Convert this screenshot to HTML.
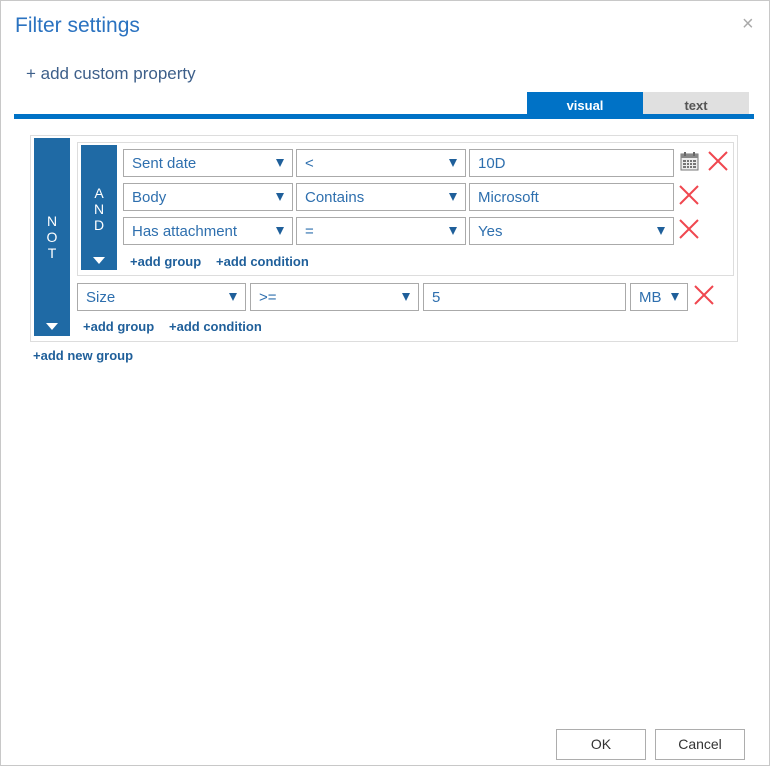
<!DOCTYPE html>
<html><head><meta charset="utf-8"><style>
*{box-sizing:border-box;margin:0;padding:0}
body{width:770px;height:766px;background:#fff;font-family:"Liberation Sans",sans-serif;position:relative;overflow:hidden}
.a{position:absolute}
.win{left:0;top:0;width:770px;height:766px;border:1px solid #c8c8c8}
.f{position:absolute;height:28px;border:1px solid #aaa;background:#fff;color:#2e6fae;font-size:15px;line-height:27px;padding-left:8px}
.f.s:after{content:"";position:absolute;right:8px;top:9px;border-left:4.5px solid transparent;border-right:4.5px solid transparent;border-top:8px solid #1f5f9a}
.lnk{position:absolute;font-size:13px;font-weight:bold;color:#1f5f9a}
.bar{position:absolute;background:#1f6aa5;color:#fff;font-size:14px;text-align:center;line-height:16px}
.tri{position:absolute;left:50%;margin-left:-6px;border-left:6px solid transparent;border-right:6px solid transparent;border-top:7px solid #fff}
.x{position:absolute;width:22px;height:22px}
.btn{position:absolute;top:729px;height:31px;border:1px solid #adadad;background:#fff;font-size:14px;color:#333;text-align:center;line-height:29px}
</style></head><body>
<div class="a win"></div>
<div class="a" style="left:15px;top:14px;font-size:21px;color:#2a72c0">Filter settings</div>
<div class="a" style="left:742px;top:13px;font-size:20px;color:#aaa">×</div>
<div class="a" style="left:26px;top:64px;font-size:17px;color:#3d5f8a">+ add custom property</div>
<div class="a" style="left:527px;top:92px;width:116px;height:24px;background:#0072c6;color:#fff;font-size:13px;font-weight:bold;text-align:center;line-height:27px">visual</div>
<div class="a" style="left:643px;top:92px;width:106px;height:22px;background:#e0e0e0;color:#555;font-size:13px;font-weight:bold;text-align:center;line-height:28px">text</div>
<div class="a" style="left:14px;top:114px;width:740px;height:5px;background:#0072c6"></div>

<div class="a" style="left:30px;top:135px;width:708px;height:207px;border:1px solid #ddd"></div>
<div class="bar" style="left:34px;top:138px;width:36px;height:198px"><div style="position:absolute;top:75px;width:100%">N<br>O<br>T</div><div class="tri" style="top:185px"></div></div>
<div class="a" style="left:77px;top:142px;width:657px;height:134px;border:1px solid #ddd"></div>
<div class="bar" style="left:81px;top:145px;width:36px;height:125px"><div style="position:absolute;top:40px;width:100%">A<br>N<br>D</div><div class="tri" style="top:112px"></div></div>

<div class="f s" style="left:123px;top:149px;width:170px">Sent date</div>
<div class="f s" style="left:296px;top:149px;width:170px">&lt;</div>
<div class="f" style="left:469px;top:149px;width:205px">10D</div>
<svg class="a" style="left:680px;top:151px" width="19" height="20" viewBox="0 0 19 20"><rect x="1" y="3" width="17" height="16" fill="#eee" stroke="#777"/><rect x="1" y="3" width="17" height="4" fill="#888"/><rect x="4" y="1" width="2" height="4" fill="#666"/><rect x="13" y="1" width="2" height="4" fill="#666"/><g fill="#777"><rect x="3" y="9" width="13" height="8"/></g><g stroke="#eee" stroke-width="1"><line x1="6.5" y1="9" x2="6.5" y2="17"/><line x1="9.5" y1="9" x2="9.5" y2="17"/><line x1="12.5" y1="9" x2="12.5" y2="17"/><line x1="3" y1="11.5" x2="16" y2="11.5"/><line x1="3" y1="14.5" x2="16" y2="14.5"/></g></svg>
<svg class="x" style="left:707px;top:150px" viewBox="0 0 22 22"><path d="M2 2L20 20M20 2L2 20" stroke="#f0474f" stroke-width="2"/></svg>

<div class="f s" style="left:123px;top:183px;width:170px">Body</div>
<div class="f s" style="left:296px;top:183px;width:170px">Contains</div>
<div class="f" style="left:469px;top:183px;width:205px">Microsoft</div>
<svg class="x" style="left:678px;top:184px" viewBox="0 0 22 22"><path d="M2 2L20 20M20 2L2 20" stroke="#f0474f" stroke-width="2"/></svg>

<div class="f s" style="left:123px;top:217px;width:170px">Has attachment</div>
<div class="f s" style="left:296px;top:217px;width:170px">=</div>
<div class="f s" style="left:469px;top:217px;width:205px">Yes</div>
<svg class="x" style="left:678px;top:218px" viewBox="0 0 22 22"><path d="M2 2L20 20M20 2L2 20" stroke="#f0474f" stroke-width="2"/></svg>

<div class="lnk" style="left:130px;top:254px">+add group</div>
<div class="lnk" style="left:216px;top:254px">+add condition</div>

<div class="f s" style="left:77px;top:283px;width:169px">Size</div>
<div class="f s" style="left:250px;top:283px;width:169px">&gt;=</div>
<div class="f" style="left:423px;top:283px;width:203px">5</div>
<div class="f s" style="left:630px;top:283px;width:58px">MB</div>
<svg class="x" style="left:693px;top:284px" viewBox="0 0 22 22"><path d="M2 2L20 20M20 2L2 20" stroke="#f0474f" stroke-width="2"/></svg>

<div class="lnk" style="left:83px;top:319px">+add group</div>
<div class="lnk" style="left:169px;top:319px">+add condition</div>
<div class="lnk" style="left:33px;top:348px">+add new group</div>

<div class="btn" style="left:556px;width:90px">OK</div>
<div class="btn" style="left:655px;width:90px">Cancel</div>
</body></html>
